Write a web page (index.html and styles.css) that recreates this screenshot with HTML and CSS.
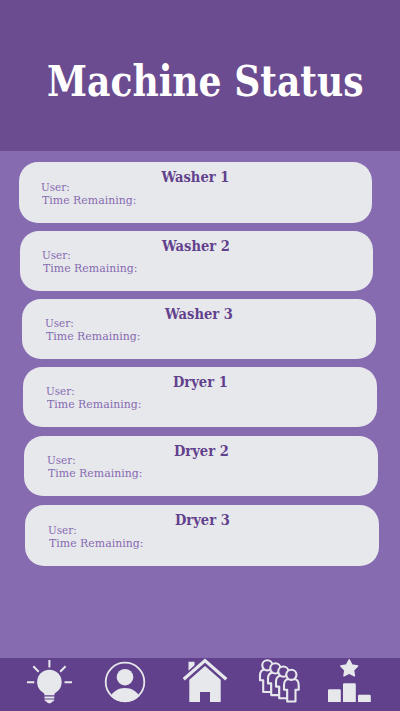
FILE: index.html
```html
<!DOCTYPE html>
<html lang="en">
<head>
<meta charset="utf-8">
<title>Machine Status</title>
<link rel="stylesheet" href="styles.css">
</head>
<body>
<header class="header"><h1 class="title">Machine Status</h1></header>
<main class="machines">
  <section class="card card-w1"><h2 class="name">Washer 1</h2><p class="user">User:</p><p class="time">Time Remaining:</p></section>
  <section class="card card-w2"><h2 class="name">Washer 2</h2><p class="user">User:</p><p class="time">Time Remaining:</p></section>
  <section class="card card-w3"><h2 class="name">Washer 3</h2><p class="user">User:</p><p class="time">Time Remaining:</p></section>
  <section class="card card-d1"><h2 class="name dryer">Dryer 1</h2><p class="user">User:</p><p class="time">Time Remaining:</p></section>
  <section class="card card-d2"><h2 class="name dryer">Dryer 2</h2><p class="user">User:</p><p class="time">Time Remaining:</p></section>
  <section class="card card-d3"><h2 class="name dryer">Dryer 3</h2><p class="user">User:</p><p class="time">Time Remaining:</p></section>
</main>
<nav class="tabs">
  <svg class="icon bulb" viewBox="0 0 46 46" width="46" height="46">
    <circle class="fill" cx="22.400" cy="24" r="12.300"/>
    <path class="fill" d="M12.500 31c3.300 2.200 4.800 3.500 5 6.300h9.800c.2-2.800 1.700-4.100 5-6.300z"/>
    <path class="fill" d="M17.500 38.400h9.800v2h-9.800zM17.500 41.500h9.800c0 1.600-1 2-2.300 2.200-.8 2.200-4.400 2.200-5.200 0-1.300-.2-2.300-.6-2.300-2.200z"/>
    <path class="ray" d="M22.400 2v7.500M6.300 8.300l5.400 5.400M38.600 8.300l-5.400 5.400M0 24.300h7.300M37.500 24.300h7.500"/>
  </svg>
  <svg class="icon person" viewBox="0 0 42 42" width="42" height="42">
    <defs><clipPath id="disc"><circle cx="21" cy="21" r="20"/></clipPath></defs>
    <circle class="ring" cx="21" cy="21" r="19.300"/>
    <circle class="fill" cx="21" cy="16.200" r="8.300"/>
    <path class="fill" clip-path="url(#disc)" d="M6 36c3-5.500 8.500-8.900 15-8.900S33 30.500 36 36v6H6z"/>
  </svg>
  <svg class="icon house" viewBox="0 0 46 45" width="46" height="45">
    <path class="fill" d="M6.500 3.800h6v3.400l-6 5.500z"/>
    <path class="roof" d="M1.700 21.200L23 2.600l21.300 18.600"/>
    <path class="fill" d="M7.300 21.800L23 8l15.700 13.800V44H28V34H18v10H7.300z"/>
  </svg>
  <svg class="icon queue" viewBox="0 0 42 45" width="42" height="45">
    <defs><g id="member"><path d="M5.400 11.500C2 12.200 1 14 1 17.500v4.800h3.200V34h8.300V22.300h3.200v-4.800c0-3.500-1-5.300-4.400-6"/><circle cx="8.350" cy="7.300" r="5.100"/></g></defs>
    <use href="#member"/><use href="#member" x="8" y="3.100"/><use href="#member" x="16" y="6.300"/><use href="#member" x="24" y="9.500"/>
  </svg>
  <svg class="icon ranks" viewBox="0 0 44 45" width="44" height="45">
    <path class="star" d="M21.200 1.800l2.700 5.300 5.700.9-4.100 4.100.9 5.700-5.200-2.600-5.200 2.600.9-5.700L12.800 8l5.700-.9z"/>
    <path class="fill" d="M0 32.500q0-1.200 1.200-1.200h10.400q1.200 0 1.200 1.200V44H0zM15 26.500q0-1.200 1.200-1.200h10.400q1.200 0 1.200 1.200V44H15zM30 37.900q0-1.200 1.200-1.200h10.400q1.200 0 1.200 1.200V44H30z"/>
  </svg>
</nav>
</body>
</html>
```
FILE: styles.css
```css
* { box-sizing: border-box; }
body {
  margin: 0;
  height: 711px;
  overflow: hidden;
  display: flex;
  flex-direction: column;
  background: #866bb0;
  font-family: "Roboto Slab", "DejaVu Serif", serif;
}
h1, h2, p { margin: 0; white-space: nowrap; width: max-content; transform-origin: left center; }
.header { height: 151px; flex: none; padding: 57px 0 0 46.500px; background: #6b4c90; }
.title { color: #fff; font-size: 42px; line-height: 50px; font-weight: 700; transform: scaleX(.86); }
.machines { flex: 1; padding: 11px 0 0 18.500px; }
.card {
  width: 353.500px;
  height: 60px;
  margin-bottom: 8px;
  padding: 5px 0 0 22.500px;
  border-radius: 19px;
  background: #e7e8ec;
}
.card-w1 { height: 61px; }
.card-w2 { margin-left: 1px; }
.card-w3 { margin-left: 3.500px; }
.card-d1 { margin-left: 4.500px; margin-bottom: 9px; }
.card-d2 { margin-left: 5.500px; margin-bottom: 9px; }
.card-d3 { margin-left: 6.500px; height: 61px; }
.name { margin-left: 120px; color: #62418c; font-size: 15.500px; line-height: 20px; font-weight: 700; transform: scaleX(.845); }
.dryer { margin-left: 127.500px; }
.card-w1 .name { padding-left: .5px; }
.user, .time { color: #866bb0; font-size: 11.700px; line-height: 13px; }
.user { margin-top: -7px; transform: scaleX(.89); }
.card-w1 .user, .card-d3 .user { margin-top: -6px; }
.time { margin-left: 1px; transform: scaleX(.935); }
.tabs {
  flex: none;
  height: 53px;
  padding: 0 28px 0 27px;
  display: flex;
  background: #62418c;
}
.icon { flex: none; overflow: visible; }
.fill { fill: #e7e8ec; }
.ray { stroke: #e7e8ec; stroke-width: 2; fill: none; }
.person { margin: 3px 0 0 31px; }
.ring { fill: none; stroke: #e7e8ec; stroke-width: 1.800; }
.house { margin: 0 0 0 36px; }
.roof { fill: none; stroke: #e7e8ec; stroke-width: 3.200; }
.queue { margin: 0 0 0 31px; fill: #62418c; stroke: #e7e8ec; stroke-width: 2.100; stroke-linejoin: round; }
.ranks { margin: 0 0 0 27px; }
.star { fill: #e7e8ec; stroke: #e7e8ec; stroke-width: 1.500; stroke-linejoin: round; }
```
